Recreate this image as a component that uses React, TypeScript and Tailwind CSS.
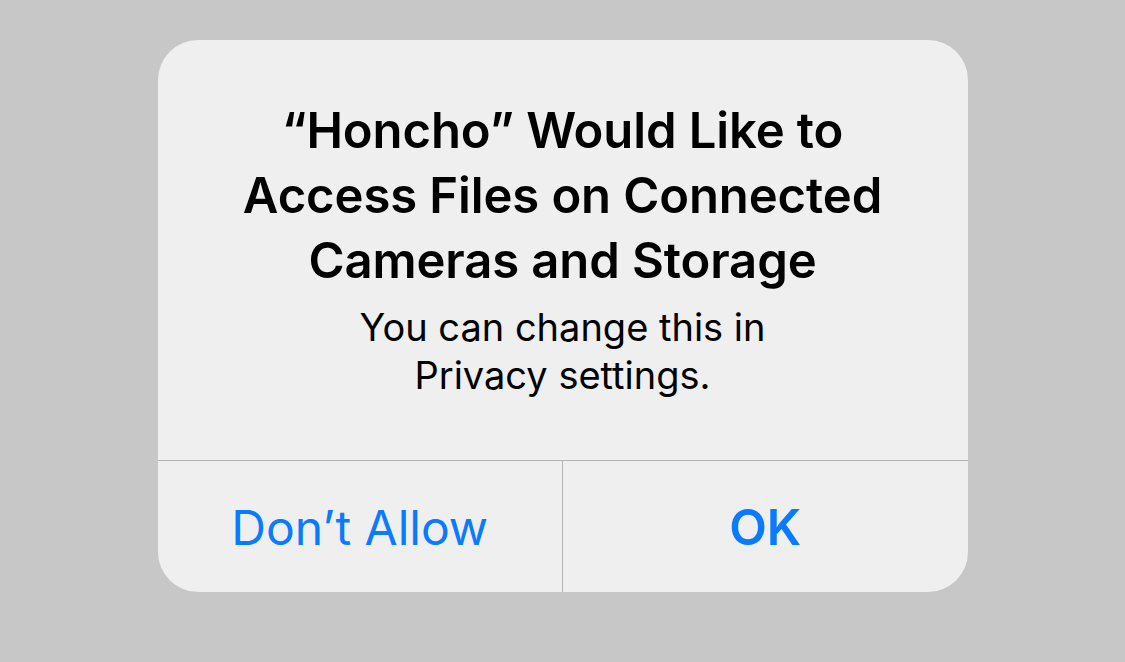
export default function App() {
  return (
    <div
      className="min-h-[662px] w-full bg-[#c7c7c7] pt-[40px]"
      style={{ fontFamily: "Inter, 'Noto Sans', 'Liberation Sans', sans-serif" }}
    >
      <div className="mx-auto w-[810px] overflow-hidden rounded-[40px] bg-[#efefef]">
        <div className="flex h-[420px] flex-col items-center px-[40px] pt-[58px] text-center">
          <h1 className="text-[49px] font-semibold leading-[65px] tracking-[-0.1px] text-black">
            “Honcho” Would Like to
            <br />
            Access Files on Connected
            <br />
            Cameras and Storage
          </h1>
          <p className="mt-[10px] text-[38px] leading-[48px] text-black">
            You can change this in
            <br />
            Privacy settings.
          </p>
        </div>
        <div className="flex h-[132px] border-t border-[#b4b4b4]">
          <button className="flex flex-1 items-center justify-center border-r border-[#b4b4b4] pt-[2px] text-[48px] text-[#0a7aff]">
            Don’t Allow
          </button>
          <button className="flex flex-1 items-center justify-center pt-[2px] text-[49px] font-semibold text-[#0a7aff]">
            OK
          </button>
        </div>
      </div>
    </div>
  )
}
